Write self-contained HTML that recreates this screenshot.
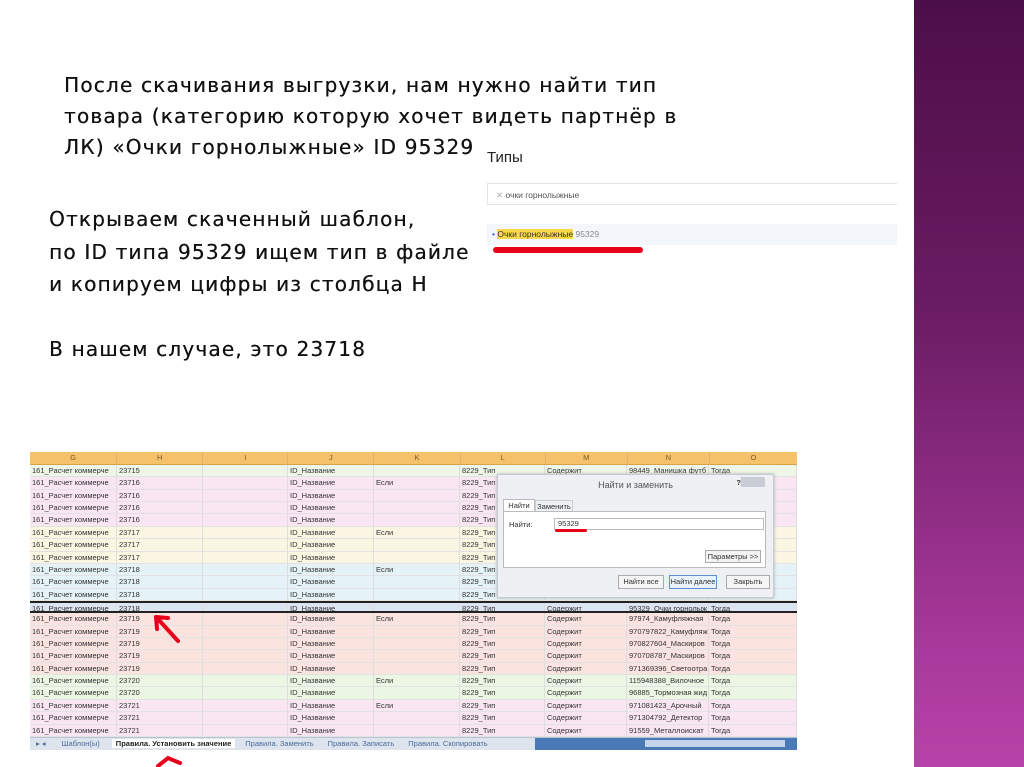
<!DOCTYPE html><html><head><meta charset="utf-8"><style>
body{margin:0;width:1024px;height:767px;background:#fff;position:relative;overflow:hidden;font-family:"Liberation Sans","DejaVu Sans",sans-serif}
.p{position:absolute;font-family:"DejaVu Sans",sans-serif;font-size:20px;letter-spacing:1.2px;color:#111;line-height:31px;white-space:nowrap;text-shadow:0.3px 0 0 #111}
.purp{position:absolute;left:914px;top:0;width:110px;height:767px;background:linear-gradient(#4c0e48,#6a1c63 40%,#a9399c 85%,#b843a8)}
.ss{position:absolute;left:30px;top:452px;width:767px;height:296px;font-size:7.5px;color:#333}
.hdr{height:12px;background:#f5c26b;display:flex;border-bottom:1px solid #d9a24a}
.hdr div{border-right:1px solid #e3b262;text-align:center;color:#7a5a20;line-height:12px}
.row{height:12.36px;display:flex;border-bottom:1px solid #e2e2e2;box-sizing:border-box}
.row div{border-right:1px solid #ddd;line-height:11px;padding-left:2px;white-space:nowrap;overflow:hidden;box-sizing:border-box}
</style></head><body>
<div class="p" style="left:64px;top:70px">После скачивания выгрузки, нам нужно найти тип<br>товара (категорию которую хочет видеть партнёр в<br>ЛК) «Очки горнолыжные» ID 95329</div>
<div class="p" style="left:49px;top:203px;line-height:32.5px">Открываем скаченный шаблон,<br>по ID типа 95329 ищем тип в файле<br>и копируем цифры из столбца H<br><br>В нашем случае, это 23718</div>
<div style="position:absolute;left:487px;top:149px;font-size:15px;color:#222">Типы</div>
<div style="position:absolute;left:487px;top:183px;width:410px;height:22px;border:1px solid #e4e4e4;border-right:none;font-size:8.5px;color:#555;line-height:22px;padding-left:8px;box-sizing:border-box"><span style="color:#aaa">✕</span> очки горнолыжные</div>
<div style="position:absolute;left:487px;top:224px;width:410px;height:21px;background:#f3f7fb;font-size:8.5px;line-height:21px;padding-left:5px;box-sizing:border-box"><span style="color:#2a5bd7">•</span> <span style="background:#fbd84a;color:#333">Очки горнолыжные</span> <span style="color:#888">95329</span></div>
<div style="position:absolute;left:493px;top:247px;width:150px;height:6px;background:#e8001b;border-radius:3px"></div>
<div class="purp"></div>
<div class="ss">
<div class="hdr"><div style="width:87px">G</div><div style="width:86px">H</div><div style="width:85px">I</div><div style="width:86px">J</div><div style="width:86px">K</div><div style="width:85px">L</div><div style="width:82px">M</div><div style="width:82px">N</div><div style="width:88px;border:none">O</div></div>
<div id="rows"></div>
<div style="height:12px;background:#dde4ee;border-top:1px solid #b8c4d4;font-size:7.5px;line-height:12px;color:#4a6a9a;white-space:nowrap;position:relative"><span style="padding-left:6px">▸ ◂</span><span style="margin-left:16px">Шаблон(ы)</span><span style="margin-left:12px;background:#fff;color:#222;font-weight:bold;padding:0 4px">Правила. Установить значение</span><span style="margin-left:10px">Правила. Заменить</span><span style="margin-left:14px">Правила. Записать</span><span style="margin-left:14px">Правила. Скопировать</span><div style="position:absolute;left:505px;top:0;width:262px;height:12px;background:#4a79b8"></div><div style="position:absolute;left:615px;top:2px;width:140px;height:7px;background:#c5d3e8"></div></div>
</div>
<div style="position:absolute;left:497px;top:474px;width:275px;height:122px;background:#eef0f3;border:1px solid #c6ccd4;font-size:7.5px;color:#333;box-shadow:0 0 3px #aaa">
<div style="text-align:center;font-size:9px;color:#555;margin-top:5px">Найти и заменить</div>
<div style="position:absolute;right:32px;top:3px;font-weight:bold">?</div>
<div style="position:absolute;right:8px;top:2px;width:24px;height:10px;background:#c9ced6"></div>
<div style="position:absolute;left:5px;top:24px;width:30px;height:12px;background:#fff;border:1px solid #bbb;border-bottom:none;text-align:center;line-height:12px">Найти</div>
<div style="position:absolute;left:37px;top:25px;width:36px;height:11px;border:1px solid #ccc;text-align:center;line-height:11px">Заменить</div>
<div style="position:absolute;left:5px;top:36px;width:261px;height:55px;background:#fff;border:1px solid #bbb">
<span style="position:absolute;left:5px;top:8px">Найти:</span>
<div style="position:absolute;left:50px;top:6px;width:205px;height:10px;border:1px solid #bbb;padding-left:3px;line-height:10px">95329</div>
<div style="position:absolute;left:51px;top:17px;width:32px;height:3px;background:#e8001b;border-radius:2px"></div>
<div style="position:absolute;right:4px;top:38px;width:54px;height:11px;border:1px solid #aaa;background:#f3f3f3;text-align:center;line-height:11px">Параметры &gt;&gt;</div></div>
<div style="position:absolute;left:120px;top:100px;width:44px;height:12px;border:1px solid #aaa;background:#f5f5f5;text-align:center;line-height:12px">Найти все</div>
<div style="position:absolute;left:171px;top:100px;width:46px;height:12px;border:1px solid #5a8fd0;background:#eaf2fb;text-align:center;line-height:12px">Найти далее</div>
<div style="position:absolute;left:228px;top:100px;width:42px;height:12px;border:1px solid #aaa;background:#f5f5f5;text-align:center;line-height:12px">Закрыть</div>
</div>
<svg style="position:absolute;left:150px;top:605px" width="40" height="40"><path d="M28 36 L8 14 M6 12 L7 24 M6 12 L18 13" stroke="#e8001b" stroke-width="4" fill="none" stroke-linecap="round"/></svg>
<svg style="position:absolute;left:150px;top:750px" width="40" height="17"><path d="M8 16 L18 8 L30 13" stroke="#e8001b" stroke-width="4" fill="none" stroke-linecap="round"/></svg>
<script>
var d=[["23715","#eef6e8","","98449_Манишка футб"],["23716","#fae6f3","Если",""],["23716","#fae6f3","",""],["23716","#fae6f3","",""],["23716","#fae6f3","",""],["23717","#fbf6e2","Если",""],["23717","#fbf6e2","",""],["23717","#fbf6e2","",""],["23718","#e5f3f8","Если",""],["23718","#e5f3f8","",""],["23718","#e5f3f8","",""],["23718","#dbe5f1","","95329_Очки горнолыж"],["23719","#fbe3df","Если","97974_Камуфляжная"],["23719","#fbe3df","","970797822_Камуфляж"],["23719","#fbe3df","","970827604_Маскиров"],["23719","#fbe3df","","970708787_Маскиров"],["23719","#fbe3df","","971369396_Светоотра"],["23720","#ebf6e4","Если","115948388_Вилочное"],["23720","#ebf6e4","","96885_Тормозная жид"],["23721","#fae6f3","Если","971081423_Арочный"],["23721","#fae6f3","","971304792_Детектор"],["23721","#fae6f3","","91559_Металлоискат"]];
var w=[87,86,85,86,86,85,82,82,88],h="";
d.forEach(function(r,i){var c=["161_Расчет коммерче",r[0],"","ID_Название",r[2],"8229_Тип",i==0||i>10?"Содержит":"",r[3],i==0||i>10?"Тогда":""];
h+='<div class="row" style="background:'+r[1]+(i==11?';border-top:2px solid #222;border-bottom:2px solid #222':'')+'">';
c.forEach(function(t,j){h+='<div style="width:'+w[j]+'px">'+t+'</div>'});h+='</div>'});
document.getElementById('rows').innerHTML=h;
</script>
</body></html>
